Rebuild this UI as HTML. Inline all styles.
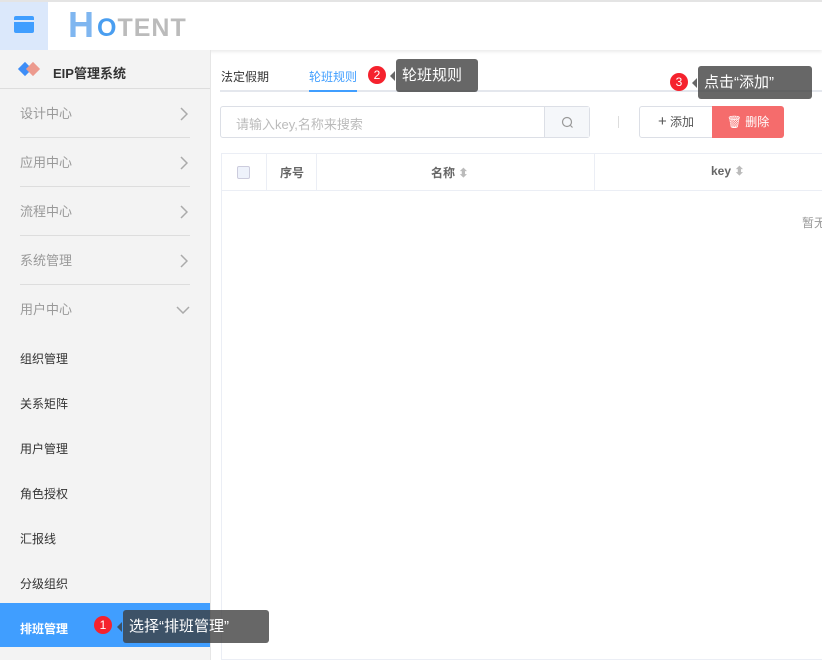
<!DOCTYPE html><html><head><meta charset="utf-8"><style>
*{margin:0;padding:0;box-sizing:border-box}
body{width:822px;height:660px;overflow:hidden;background:#fff;font-family:"Liberation Sans","Noto Sans CJK SC",sans-serif;font-size:12px;color:#333;position:relative}
.a{position:absolute;white-space:nowrap}
.hdr{left:0;top:0;width:822px;height:50px;border-top:2px solid #e4e4e4;box-shadow:0 2px 3px rgba(0,0,0,.08);background:#fff}
.side{left:0;top:50px;width:210px;height:610px;background:#f3f3f3}
.mi{position:absolute;left:20px;width:170px;height:49px;border-bottom:1px solid #ddd;color:#999;font-size:13px;line-height:49px}
.mi svg{position:absolute;right:2px;top:18px}
.sub{position:absolute;left:20px;font-size:12px;color:#333}
.tip{background:rgba(60,60,60,.78);color:#fff;font-size:15px;border-radius:3px;padding:0 6px;height:33px;line-height:33px;z-index:5}
.tip:before{content:"";position:absolute;left:-6px;top:12px;border:5px solid transparent;border-right-color:rgba(60,60,60,.78);border-left:0;width:0}
.dot{width:18px;height:18px;border-radius:50%;background:#f5222d;color:#fff;font-size:12px;text-align:center;line-height:18px}
</style></head><body>
<div class="a hdr"></div>
<div class="a" style="left:0;top:2px;width:48px;height:48px;background:#dbe8fb"></div>
<div class="a" style="left:14px;top:16px;width:20px;height:17px;background:#409eff;border-radius:2px"><div style="margin-top:4px;height:2px;background:#dbe8fb"></div></div>
<div class="a" style="left:68px;top:4px;font-size:36px;font-weight:bold;color:#7fb6f0">H</div>
<div class="a" style="left:97px;top:14px;font-size:25px;font-weight:bold;color:#bbb;letter-spacing:1px"><span style="color:#4a9ef0">O</span>TENT</div>
<div class="a side"></div>
<div class="a" style="left:210px;top:50px;width:1px;height:610px;background:#e6e6e6"></div>
<div class="a" style="left:20px;top:64px;width:10px;height:10px;background:#3e8ef7;transform:rotate(45deg)"></div>
<div class="a" style="left:28px;top:64px;width:10px;height:10px;background:#ec9a8e;transform:rotate(45deg)"></div>
<div class="a" style="left:53px;top:63px;font-size:13px;font-weight:bold;color:#333">EIP管理系统</div>
<div class="a" style="left:0;top:88px;width:210px;height:1px;background:#ddd"></div>
<div class="mi" style="top:89px">设计中心<svg width="8" height="14"><path d="M1 1l6 6-6 6" fill="none" stroke="#aaa" stroke-width="1.5"/></svg></div>
<div class="mi" style="top:138px">应用中心<svg width="8" height="14"><path d="M1 1l6 6-6 6" fill="none" stroke="#aaa" stroke-width="1.5"/></svg></div>
<div class="mi" style="top:187px">流程中心<svg width="8" height="14"><path d="M1 1l6 6-6 6" fill="none" stroke="#aaa" stroke-width="1.5"/></svg></div>
<div class="mi" style="top:236px">系统管理<svg width="8" height="14"><path d="M1 1l6 6-6 6" fill="none" stroke="#aaa" stroke-width="1.5"/></svg></div>
<div class="mi" style="top:285px;border:0">用户中心<svg width="14" height="8" style="top:21px;right:0"><path d="M1 1l6 6 6-6" fill="none" stroke="#aaa" stroke-width="1.5"/></svg></div>
<div class="sub" style="top:350px">组织管理</div>
<div class="sub" style="top:395px">关系矩阵</div>
<div class="sub" style="top:440px">用户管理</div>
<div class="sub" style="top:485px">角色授权</div>
<div class="sub" style="top:530px">汇报线</div>
<div class="sub" style="top:575px">分级组织</div>
<div class="a" style="left:0;top:603px;width:210px;height:44px;background:#409eff"></div>
<div class="a" style="left:20px;top:620px;color:#fff;font-weight:bold">排班管理</div>
<div class="a" style="left:221px;top:68px;color:#333">法定假期</div>
<div class="a" style="left:309px;top:68px;color:#409eff">轮班规则</div>
<div class="a" style="left:220px;top:90px;width:602px;height:2px;background:#e4e7ed"></div>
<div class="a" style="left:309px;top:90px;width:48px;height:2px;background:#409eff"></div>
<div class="a" style="left:220px;top:106px;width:370px;height:32px;border:1px solid #dcdfe6;border-radius:3px"></div>
<div class="a" style="left:236px;top:114px;color:#bbb;font-size:13px">请输入key,名称来搜索</div>
<div class="a" style="left:544px;top:107px;width:45px;height:30px;background:#f5f7fa;border-left:1px solid #dcdfe6"><svg width="45" height="30"><circle cx="22" cy="15" r="4.5" fill="none" stroke="#999" stroke-width="1.2"/><path d="M25.5 18.5l2 2" stroke="#999" stroke-width="1.2"/></svg></div>
<div class="a" style="left:618px;top:116px;width:1px;height:12px;background:#ddd"></div>
<div class="a" style="left:639px;top:106px;width:74px;height:32px;border:1px solid #dcdfe6;border-radius:3px 0 0 3px;text-align:center;line-height:30px;color:#555"><span style="font-size:15px">+</span> 添加</div>
<div class="a" style="left:712px;top:106px;width:72px;height:32px;background:#f56c6c;border-radius:0 3px 3px 0;text-align:center;line-height:32px;color:#fff">🗑 删除</div>
<div class="a" style="left:221px;top:153px;width:601px;height:507px;border:1px solid #ebeef5;border-right:0"></div>
<div class="a" style="left:221px;top:190px;width:601px;height:1px;background:#ebeef5"></div>
<div class="a" style="left:266px;top:153px;width:1px;height:38px;background:#ebeef5"></div>
<div class="a" style="left:316px;top:153px;width:1px;height:38px;background:#ebeef5"></div>
<div class="a" style="left:594px;top:153px;width:1px;height:38px;background:#ebeef5"></div>
<div class="a" style="left:237px;top:166px;width:13px;height:13px;border:1px solid #ccd;background:#eef2fb;border-radius:2px"></div>
<div class="a" style="left:280px;top:164px;color:#666;font-weight:bold">序号</div>
<div class="a" style="left:431px;top:164px;color:#666;font-weight:bold">名称 <span style="color:#bbb">⬍</span></div>
<div class="a" style="left:711px;top:164px;color:#666;font-weight:bold">key <span style="color:#bbb">⬍</span></div>
<div class="a" style="left:802px;top:214px;color:#999">暂无</div>
<div class="a dot" style="left:94px;top:616px">1</div>
<div class="a tip" style="left:123px;top:610px;width:146px">选择“排班管理”</div>
<div class="a dot" style="left:368px;top:66px">2</div>
<div class="a tip" style="left:396px;top:59px;width:82px">轮班规则</div>
<div class="a dot" style="left:670px;top:73px">3</div>
<div class="a tip" style="left:698px;top:66px;width:114px">点击“添加”</div>
</body></html>
